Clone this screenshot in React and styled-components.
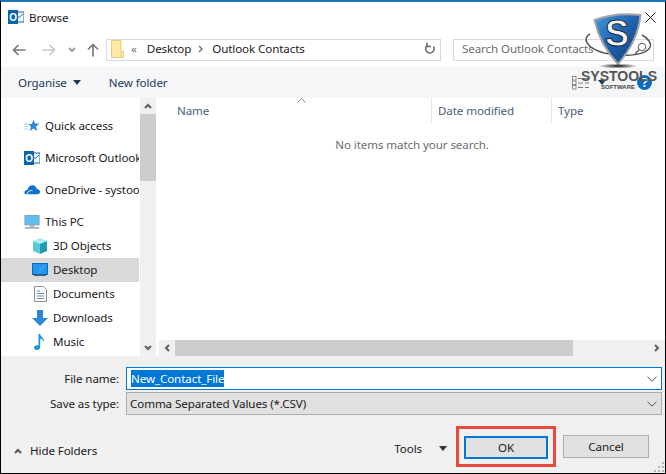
import React from 'react';
import styled, { createGlobalStyle } from 'styled-components';

const Global = createGlobalStyle`
  html, body { margin: 0; padding: 0; background: #fff; }
  * { box-sizing: border-box; }
`;

const Window = styled.div`
  position: relative;
  width: 666px;
  height: 474px;
  display: flex;
  flex-direction: column;
  overflow: hidden;
  background: #fff;
  border: 1px solid #000;
  border-top: 2px solid #1b78b4;
  font-family: "Noto Sans", "Liberation Sans", sans-serif;
  font-size: 11.6px;
  letter-spacing: -0.1px;
  color: #1a1a1a;
`;

const TitleBar = styled.div`
  height: 30px;
  display: flex;
  align-items: center;
  padding: 0 7px;
  gap: 5px;
`;

const Title = styled.span`
  flex: 1;
`;

const AddressBar = styled.div`
  height: 35px;
  display: flex;
  align-items: center;
  padding-left: 11px;
`;

const NavButton = styled.div`
  display: flex;
  align-items: center;
  justify-content: center;
  width: ${p => p.$w}px;
  height: 22px;
  margin-left: ${p => p.$ml || 0}px;
`;

const PathBox = styled.div`
  width: 335px;
  height: 22px;
  margin-left: 6px;
  display: flex;
  align-items: center;
  border: 1px solid #d9d9d9;
  padding: 0 0 2px 4px;
`;

const Crumb = styled.span`
  margin-left: ${p => p.$ml || 0}px;
  line-height: ${p => (p.$icon ? 0 : 'normal')};
  color: ${p => (p.$muted ? '#777' : 'inherit')};
`;

const Refresh = styled.div`
  margin-left: auto;
  width: 21px;
  display: flex;
  justify-content: center;
`;

const SearchBox = styled.div`
  width: 201px;
  height: 22px;
  margin-left: 12px;
  display: flex;
  align-items: center;
  justify-content: space-between;
  border: 1px solid #d9d9d9;
  padding: 0 6px 2px 8px;
  color: #6d6d6d;
`;

const CommandBar = styled.div`
  height: 31px;
  display: flex;
  align-items: center;
  background: #f5f6f7;
  color: #1e395b;
  padding: 0 13px 0 17px;
`;

const Command = styled.span`
  display: flex;
  align-items: center;
  gap: 6px;
  margin-right: ${p => p.$mr || 0}px;
  margin-left: ${p => p.$ml || 0}px;
`;

const Spacer = styled.div`
  flex: 1;
`;

const HelpBadge = styled.div`
  width: 15px;
  height: 15px;
  border-radius: 50%;
  background: #0c6cc4;
  color: #fff;
  font-weight: 700;
  font-size: 12px;
  line-height: 15px;
  text-align: center;
  margin-left: 31px;
`;

const Body = styled.div`
  height: 258px;
  display: flex;
`;

const Sidebar = styled.div`
  width: 138px;
  padding-top: 16px;
  overflow: hidden;
`;

const NavGroup = styled.div`
  margin-bottom: 8px;
`;

const NavRow = styled.div`
  height: 24px;
  display: flex;
  align-items: center;
  gap: 5px;
  padding-left: ${p => (p.$child ? 31 : 23)}px;
  padding-bottom: 1px;
  white-space: nowrap;
  background: ${p => (p.$active ? '#d9d9d9' : 'transparent')};
`;

const IconSlot = styled.span`
  width: 16px;
  height: 16px;
  flex: none;
  display: flex;
  align-items: center;
  justify-content: center;
`;

const VScroll = styled.div`
  width: 16px;
  margin-left: 1px;
  display: flex;
  flex-direction: column;
  background: #f0f0f0;
`;

const ArrowCell = styled.div`
  flex: none;
  width: 16px;
  height: 16px;
  display: flex;
  align-items: center;
  justify-content: center;
`;

const VThumb = styled.div`
  height: 67px;
  background: #cdcdcd;
`;

const Track = styled.div`
  flex: 1;
`;

const Main = styled.div`
  flex: 1;
  margin-left: 3px;
  display: flex;
  flex-direction: column;
  min-width: 0;
`;

const Header = styled.div`
  position: relative;
  height: 25px;
  display: flex;
  color: #4c607a;
`;

const Column = styled.div`
  width: ${p => p.$w}px;
  padding-left: ${p => p.$pl}px;
  display: flex;
  align-items: center;
  border-right: ${p => (p.$last ? 'none' : '1px solid #e5e5e5')};
`;

const SortCaret = styled.div`
  position: absolute;
  left: 138px;
  top: 0;
  line-height: 0;
`;

const Empty = styled.div`
  flex: 1;
  padding-top: 14px;
  text-align: center;
  color: #6d6d6d;
`;

const HScroll = styled.div`
  height: 16px;
  display: flex;
  background: #f0f0f0;
`;

const HThumb = styled.div`
  width: 398px;
  background: #cdcdcd;
`;

const Bottom = styled.div`
  flex: 1;
  background: #f0f0f0;
  padding-top: 11px;
  display: flex;
  flex-direction: column;
`;

const Fields = styled.div`
  display: grid;
  grid-template-columns: 118px 536px;
  column-gap: 7px;
  row-gap: 2px;
  align-items: center;
`;

const Label = styled.label`
  text-align: right;
`;

const Field = styled.div`
  height: 23px;
  display: flex;
  align-items: center;
  justify-content: space-between;
  padding: 0 4px 0 ${p => (p.$focus ? 4 : 3)}px;
  border: 1px solid ${p => (p.$focus ? '#0078d7' : '#adadad')};
  background: ${p => (p.$focus ? '#fff' : '#e1e1e1')};
`;

const Selected = styled.span`
  background: #0078d7;
  color: #fff;
  line-height: 17px;
`;

const Footer = styled.div`
  margin-top: 11px;
  display: flex;
  align-items: center;
  padding: 0 16px 0 12px;
`;

const HideFolders = styled.div`
  display: flex;
  align-items: center;
  gap: 7px;
  padding-top: 8px;
`;

const Tools = styled.div`
  display: flex;
  align-items: center;
  gap: 17px;
  margin-right: 9px;
  padding-top: 3px;
`;

const Highlight = styled.div`
  width: 100px;
  height: 41px;
  border: 3px solid #e8493f;
  padding: 7px 5px;
  margin-right: 7px;
`;

const Button = styled.div`
  width: ${p => p.$w || 86}px;
  height: 23px;
  display: flex;
  align-items: center;
  justify-content: center;
  background: #e1e1e1;
  border: ${p => (p.$primary ? '2px solid #0078d7' : '1px solid #adadad')};
`;

const Grip = styled.div`
  position: absolute;
  right: 1px;
  bottom: 1px;
  line-height: 0;
`;

const LogoMark = styled.div`
  position: absolute;
  left: 579px;
  top: 9px;
  width: 84px;
  height: 84px;
`;

const LogoName = styled.div`
  position: absolute;
  left: 1px;
  top: 56px;
  font-family: "Liberation Sans", Arial, sans-serif;
  font-weight: 700;
  font-size: 14px;
  letter-spacing: 0;
  line-height: 18px;
  color: #555;
  white-space: nowrap;
`;

const LogoSub = styled.div`
  position: absolute;
  left: 21px;
  top: 72px;
  font-family: "Liberation Sans", Arial, sans-serif;
  font-weight: 700;
  font-size: 6px;
  letter-spacing: 0;
  line-height: 8px;
  color: #444;
  white-space: nowrap;
`;

const OutlookIcon = ({ size = 16 }) => (
  <svg width={size} height={size} viewBox="0 0 16 16">
    <rect x="6" y="3" width="10" height="10" fill="#fff" stroke="#0a64ad" />
    <path d="M7 5l4 3.5L15 5" fill="none" stroke="#0a64ad" />
    <rect x="0" y="1" width="10" height="14" fill="#0a64ad" />
    <text x="5" y="12" fontSize="10" fontWeight="700" fill="#fff" textAnchor="middle" fontFamily="Liberation Sans">O</text>
  </svg>
);

const Chevron = ({ dir = 'down', color = '#606060', w = 2 }) => {
  const d = {
    up: 'M2 7l3-3 3 3',
    down: 'M2 3l3 3 3-3',
    left: 'M7 2L4 5l3 3',
    right: 'M3 2l3 3-3 3',
  }[dir];
  return (
    <svg width="10" height="10" viewBox="0 0 10 10">
      <path d={d} fill="none" stroke={color} strokeWidth={w} />
    </svg>
  );
};

const FieldArrow = () => (
  <svg width="10" height="6" viewBox="0 0 10 6">
    <path d="M.5.8L5 5.200 9.500.8" fill="none" stroke="#555" />
  </svg>
);

const Caret = ({ color = '#333' }) => (
  <svg width="8" height="5" viewBox="0 0 8 5"><path d="M0 0h8L4 5z" fill={color} /></svg>
);

const NavArrow = ({ color, rotate = 0 }) => (
  <svg width="14" height="14" viewBox="0 0 14 14" style={{ transform: `rotate(${rotate}deg)` }}>
    <path d="M1.5 7h12M6.5 2L1.5 7l5 5" fill="none" stroke={color} strokeWidth="1.7" />
  </svg>
);

const FolderIcon = () => (
  <svg width="13" height="18" viewBox="0 0 13 18">
    <path d="M.5.5h9.500v11h2.500v6H.5z" fill="#ffe9a6" stroke="#e8cc74" />
    <path d="M10 11.500v6" stroke="#e8cc74" />
  </svg>
);

const RefreshIcon = () => (
  <svg width="12" height="13" viewBox="0 0 12 13">
    <path d="M3 3.500A4.300 4.300 0 1 0 9 3.800" fill="none" stroke="#666" strokeWidth="1.5" transform="rotate(10 6 7)" />
    <path d="M3 .5v4h4" fill="none" stroke="#666" strokeWidth="1.3" />
  </svg>
);

const SearchIcon = () => (
  <svg width="13" height="13" viewBox="0 0 13 13">
    <circle cx="8" cy="5" r="3.700" fill="none" stroke="#7a7a7a" strokeWidth="1.300" />
    <path d="M5.300 7.700L1 12" stroke="#7a7a7a" strokeWidth="1.800" />
  </svg>
);

const ViewIcon = () => (
  <svg width="18" height="14" viewBox="0 0 18 14">
    <g fill="#fff" stroke="#8a8a8a">
      <rect x=".5" y=".5" width="3.500" height="3.500" />
      <rect x=".5" y="5" width="3.500" height="3.500" />
      <rect x=".5" y="9.500" width="3.500" height="3.500" />
    </g>
    <path d="M6 2.500h11M6 7h5m2 0h4M6 11.500h5m2 0h4" stroke="#777" />
  </svg>
);

const StarIcon = () => (
  <svg width="16" height="16" viewBox="0 0 16 16">
    <path d="M9.500 1.500l1.500 4 4.500.3-3.500 2.800 1.200 4.400-3.700-2.500-3.800 2.500 1.300-4.400-2.500-2.100 3.500-.7z" fill="#2b88d8" />
    <path d="M0 6h4M1 8.500h3M.5 11h3" stroke="#9ccbf0" />
  </svg>
);

const CloudIcon = () => (
  <svg width="17" height="11" viewBox="0 0 17 11">
    <path d="M1 10.500C-.5 8 1.500 5.500 3.500 6 4.500 2 8 0 11 1.500c2 1 2.500 2.500 2.500 3.500 2-.3 3.500 1.500 3.500 3 0 1.500-1 2.500-2 2.500z" fill="#0f72c7" />
    <path d="M3.500 10.500c0-3 3-4.500 5.500-3.500" fill="none" stroke="#fff" />
  </svg>
);

const MonitorIcon = () => (
  <svg width="17" height="16" viewBox="0 0 17 16">
    <rect x="1" y="1" width="15" height="10" fill="#5fbdf0" stroke="#7f9db5" />
    <rect x="6" y="11" width="5" height="2" fill="#9aa9b5" />
    <rect x="1" y="13.500" width="15" height="1.500" fill="#8a9aa6" />
  </svg>
);

const CubeIcon = () => (
  <svg width="16" height="16" viewBox="0 0 16 16">
    <path d="M8 0l7 3-7 3-7-3z" fill="#a6eef2" />
    <path d="M1 3l7 3v10l-7-3z" fill="#5cc7d6" />
    <path d="M15 3L8 6v10l7-3z" fill="#1f9cb3" />
  </svg>
);

const DesktopIcon = () => (
  <svg width="16" height="13" viewBox="0 0 16 13">
    <rect x=".5" y=".5" width="15" height="11" fill="#1f97ec" stroke="#0a6bbd" />
    <path d="M2 12.500h12" stroke="#555" />
    <path d="M6 10.500l6-8" stroke="#4aaef3" />
  </svg>
);

const DocIcon = () => (
  <svg width="13" height="16" viewBox="0 0 13 16">
    <path d="M.5.5h9l3 3v12H.5z" fill="#fbfbfb" stroke="#8f8f8f" />
    <path d="M3 5h3M3 7.500h7M3 10h7M3 12.500h7" stroke="#6f8ea8" />
  </svg>
);

const DownloadIcon = () => (
  <svg width="16" height="16" viewBox="0 0 16 16">
    <path d="M5 0h6v8h5l-8 8-8-8h5z" fill="#2f86d6" />
  </svg>
);

const MusicIcon = () => (
  <svg width="12" height="16" viewBox="0 0 12 16">
    <path d="M4.500 0h1.700c0 3 4.800 4 3.800 8-.5-2-2.300-3-3.800-3.300V13c0 1.700-1.500 3-3.300 3C1.200 16 0 15 0 13.700c0-1.400 1.500-2.500 3-2.500.6 0 1.100.1 1.500.3z" fill="#1e90e6" />
  </svg>
);

const Shield = () => (
  <svg width="84" height="60" viewBox="0 0 84 60" style={{ position: 'absolute', left: 0, top: 0 }}>
    <defs>
      <linearGradient id="shieldFill" x1="0" y1="0" x2="1" y2="1">
        <stop offset="0" stopColor="#4a97dc" />
        <stop offset="0.5" stopColor="#1d62ac" />
        <stop offset="1" stopColor="#0d3d78" />
      </linearGradient>
      <radialGradient id="floorShadow">
        <stop offset="0" stopColor="#111" />
        <stop offset="1" stopColor="#111" stopOpacity="0" />
      </radialGradient>
    </defs>
    <path d="M10 23C2 27 6 37 24 42c18 4 38 3 45-4 4-5-1-11-7-14" fill="none" stroke="#555" strokeWidth="1.500" />
    <path d="M14.500 9Q36 1 60.500 4 58 30 38 53 20 34 14.500 9z" fill="url(#shieldFill)" stroke="#a4a4a4" strokeWidth="2" />
    <text x="37" y="35" fontFamily="Liberation Sans" fontWeight="700" fontSize="36" textAnchor="middle" fill="#f4f4f4" stroke="#16283f" strokeWidth="1">S</text>
    <ellipse cx="38" cy="55" rx="20" ry="2.500" fill="url(#floorShadow)" />
  </svg>
);

const App = () => (
  <Window>
    <Global />
    <TitleBar>
      <OutlookIcon />
      <Title>Browse</Title>
      <svg width="11" height="11" viewBox="0 0 11 11" style={{ marginRight: 2 }}>
        <path d="M.5.5l10 10M10.500.5l-10 10" stroke="#222" fill="none" />
      </svg>
    </TitleBar>

    <AddressBar>
      <NavButton $w={14}><NavArrow color="#7a7a7a" /></NavButton>
      <NavButton $w={14} $ml={16}><NavArrow color="#c8c8c8" rotate={180} /></NavButton>
      <NavButton $w={10} $ml={11}><Chevron color="#a0a0a0" /></NavButton>
      <NavButton $w={14} $ml={9}><NavArrow color="#7a7a7a" rotate={90} /></NavButton>
      <PathBox>
        <FolderIcon />
        <Crumb $ml={7} $muted>«</Crumb>
        <Crumb $ml={10}>Desktop</Crumb>
        <Crumb $ml={5} $icon><Chevron dir="right" color="#777" w={1.500} /></Crumb>
        <Crumb $ml={6}>Outlook Contacts</Crumb>
        <Refresh><RefreshIcon /></Refresh>
      </PathBox>
      <SearchBox>
        <span>Search Outlook Contacts</span>
        <SearchIcon />
      </SearchBox>
    </AddressBar>

    <CommandBar>
      <Command $mr={28}>Organise <Caret color="#1e395b" /></Command>
      <Command>New folder</Command>
      <Spacer />
      <ViewIcon />
      <Command $ml={8}><Caret color="#1e395b" /></Command>
      <HelpBadge>?</HelpBadge>
    </CommandBar>

    <Body>
      <Sidebar>
        <NavGroup>
          <NavRow><IconSlot><StarIcon /></IconSlot>Quick access</NavRow>
        </NavGroup>
        <NavGroup>
          <NavRow><IconSlot><OutlookIcon /></IconSlot>Microsoft Outlook</NavRow>
        </NavGroup>
        <NavGroup>
          <NavRow><IconSlot><CloudIcon /></IconSlot>OneDrive - systools</NavRow>
        </NavGroup>
        <NavRow><IconSlot><MonitorIcon /></IconSlot>This PC</NavRow>
        <NavRow $child><IconSlot><CubeIcon /></IconSlot>3D Objects</NavRow>
        <NavRow $child $active><IconSlot><DesktopIcon /></IconSlot>Desktop</NavRow>
        <NavRow $child><IconSlot><DocIcon /></IconSlot>Documents</NavRow>
        <NavRow $child><IconSlot><DownloadIcon /></IconSlot>Downloads</NavRow>
        <NavRow $child><IconSlot><MusicIcon /></IconSlot>Music</NavRow>
      </Sidebar>
      <VScroll>
        <ArrowCell><Chevron dir="up" /></ArrowCell>
        <VThumb />
        <Track />
        <ArrowCell><Chevron dir="down" /></ArrowCell>
      </VScroll>
      <Main>
        <Header>
          <SortCaret>
            <svg width="9" height="5" viewBox="0 0 9 5"><path d="M.5 4.500l4-4 4 4" fill="none" stroke="#8a8a8a" /></svg>
          </SortCaret>
          <Column $w={273} $pl={18}>Name</Column>
          <Column $w={120} $pl={6}>Date modified</Column>
          <Column $w={113} $pl={6} $last>Type</Column>
        </Header>
        <Empty>No items match your search.</Empty>
        <HScroll>
          <ArrowCell><Chevron dir="left" /></ArrowCell>
          <HThumb />
          <Track />
          <ArrowCell><Chevron dir="right" /></ArrowCell>
        </HScroll>
      </Main>
    </Body>

    <Bottom>
      <Fields>
        <Label>File name:</Label>
        <Field $focus>
          <Selected>New_Contact_File</Selected>
          <FieldArrow />
        </Field>
        <Label>Save as type:</Label>
        <Field>
          <span>Comma Separated Values (*.CSV)</span>
          <FieldArrow />
        </Field>
      </Fields>
      <Footer>
        <HideFolders><Chevron dir="up" color="#555" />Hide Folders</HideFolders>
        <Spacer />
        <Tools>Tools <Caret /></Tools>
        <Highlight><Button $primary $w={84}>OK</Button></Highlight>
        <Button>Cancel</Button>
      </Footer>
    </Bottom>

    <Grip>
      <svg width="10" height="10" viewBox="0 0 10 10" fill="#b5b5b5">
        <rect x="8" y="0" width="2" height="2" />
        <rect x="4" y="4" width="2" height="2" />
        <rect x="8" y="4" width="2" height="2" />
        <rect x="0" y="8" width="2" height="2" />
        <rect x="4" y="8" width="2" height="2" />
        <rect x="8" y="8" width="2" height="2" />
      </svg>
    </Grip>

    <LogoMark>
      <Shield />
      <LogoName>SYSTOOLS</LogoName>
      <LogoSub>SOFTWARE</LogoSub>
    </LogoMark>
  </Window>
);

export default App;
